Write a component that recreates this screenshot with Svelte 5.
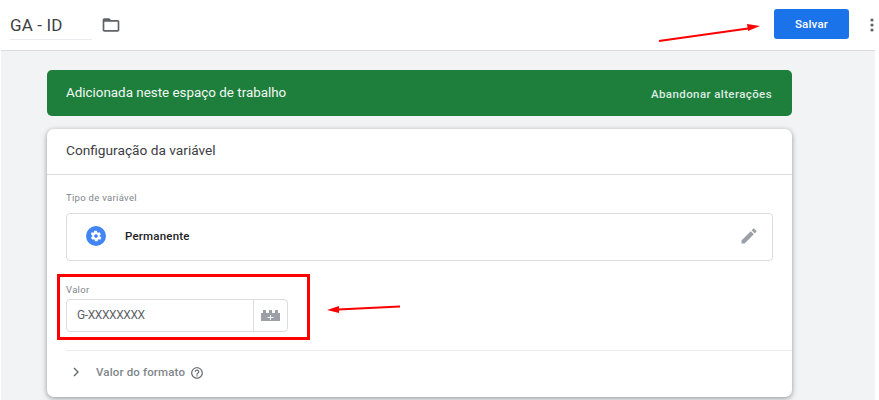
<script>
  let title = 'GA - ID';
  let value = 'G-XXXXXXXX';
</script>

<style>
  :global(body) {
    background: #fff;
    font-family: Roboto, "Liberation Sans", sans-serif;
  }

  .screen {
    position: relative;
    width: 879px;
    height: 400px;
    overflow: hidden;
    background: #fff;
  }

  .topbar {
    display: flex;
    align-items: center;
    height: 50px;
    box-sizing: border-box;
    padding: 0 0 0 10px;
  }

  .name {
    align-self: flex-start;
    width: 82px;
    height: 40px;
    box-sizing: border-box;
    padding-top: 14px;
    border-bottom: 1px solid #e8eaed;
    font-size: 17px;
    line-height: 22px;
    letter-spacing: 0.15px;
    color: #3c4043;
  }

  .folder {
    margin-left: 9px;
    margin-top: -1px;
  }

  .spacer {
    flex: 1;
  }

  .save {
    width: 75px;
    height: 30px;
    margin-top: -2px;
    border: none;
    border-radius: 3px;
    background: #1a73e8;
    color: #fff;
    font-family: inherit;
    font-size: 11.5px;
    font-weight: 500;
    letter-spacing: 0.2px;
    padding: 0;
  }

  .more {
    margin-left: 16px;
    margin-top: -1px;
  }

  .page {
    margin: 0 4px 0 1px;
    height: 350px;
    box-sizing: border-box;
    border-top: 1px solid #dadce0;
    background: #f1f3f4;
    padding: 19px 83px 0 46px;
  }

  .banner {
    display: flex;
    align-items: center;
    justify-content: space-between;
    height: 46px;
    box-sizing: border-box;
    padding: 0 20px 0 19px;
    margin-bottom: 13px;
    border-radius: 5px;
    background: #1e7e3c;
    color: #fff;
  }

  .banner-title {
    font-size: 13.4px;
    margin-top: -2px;
    color: #f3f8f4;
  }

  .banner-action {
    font-size: 11.5px;
    font-weight: 500;
    letter-spacing: 0.4px;
    color: #dcebe0;
    margin-top: 2px;
  }

  .card {
    height: 268px;
    border-radius: 7px;
    background: #fff;
    box-shadow: 0 1px 4px rgba(60, 64, 67, 0.35), 0 2px 6px rgba(60, 64, 67, 0.2);
    overflow: hidden;
  }

  .card-head {
    height: 46px;
    box-sizing: border-box;
    padding: 13px 19px 0;
    border-bottom: 1px solid #dadce0;
    font-size: 13.7px;
    line-height: 17px;
    color: #3c4043;
  }

  .card-body {
    padding: 16px 19px 0;
  }

  .label {
    font-size: 9.5px;
    line-height: 13px;
    letter-spacing: 0.3px;
    color: #80868b;
  }

  .type-box {
    display: flex;
    align-items: center;
    height: 48px;
    box-sizing: border-box;
    margin-top: 9px;
    padding: 0 13px 2px 19px;
    border: 1px solid #dadce0;
    border-radius: 4px;
  }

  .type-name {
    margin-left: 19px;
    font-size: 11.5px;
    font-weight: 500;
    letter-spacing: 0.2px;
    color: #202124;
    flex: 1;
    margin-top: -1px;
  }

  .value-label {
    margin-top: 22px;
  }

  .field {
    display: flex;
    width: 222px;
    height: 33px;
    box-sizing: border-box;
    margin-top: 3px;
    border: 1px solid #dadce0;
    border-radius: 4px;
  }

  .field-text {
    flex: 1;
    padding: 7px 0 0 10px;
    font-size: 12px;
    line-height: 16px;
    letter-spacing: -0.4px;
    color: #5f6368;
  }

  .field-icon {
    display: flex;
    align-items: center;
    justify-content: center;
    width: 33px;
    border-left: 1px solid #dadce0;
  }

  .format {
    display: flex;
    align-items: center;
    height: 42px;
    margin: 18px 0 0 19px;
    padding-left: 5px;
    border-top: 1px solid #e8eaed;
    font-size: 11.5px;
    font-weight: 500;
    letter-spacing: 0.15px;
    color: #80868b;
  }

  .format-name {
    margin-left: 15px;
  }

  .help {
    margin-left: 5px;
    margin-top: 1px;
  }

  .marks {
    position: absolute;
    top: 0;
    left: 0;
    pointer-events: none;
  }
</style>

<div class="screen">
  <header class="topbar">
    <div class="name">{title}</div>
    <svg class="folder" width="20" height="20" viewBox="0 0 24 24" fill="#5f6368">
      <path d="M20 6h-8l-2-2H4c-1.100 0-2 .9-2 2v12c0 1.100.9 2 2 2h16c1.100 0 2-.9 2-2V8c0-1.100-.9-2-2-2zm0 12H4V8h16v10z" />
    </svg>
    <div class="spacer"></div>
    <button class="save">Salvar</button>
    <svg class="more" width="14" height="18" viewBox="0 0 14 18" fill="#5f6368">
      <circle cx="7" cy="4" r="1.600" />
      <circle cx="7" cy="9" r="1.600" />
      <circle cx="7" cy="14" r="1.600" />
    </svg>
  </header>

  <main class="page">
    <section class="banner">
      <span class="banner-title">Adicionada neste espaço de trabalho</span>
      <span class="banner-action">Abandonar alterações</span>
    </section>

    <section class="card">
      <div class="card-head">Configuração da variável</div>
      <div class="card-body">
        <div class="label">Tipo de variável</div>
        <div class="type-box">
          <svg width="20" height="20" viewBox="0 0 24 24">
            <circle cx="12" cy="12" r="12" fill="#4285f4" />
            <path fill="#fff" d="M17.400 12.800c0-.3.100-.5.100-.8s0-.5-.1-.8l1.700-1.300c.2-.1.200-.3.100-.5l-1.600-2.800c-.1-.2-.3-.2-.5-.2l-2 .8c-.4-.3-.9-.6-1.400-.8l-.3-2.100c0-.2-.2-.3-.4-.3h-3.200c-.2 0-.4.100-.4.300l-.3 2.100c-.5.2-.9.5-1.400.8l-2-.8c-.2-.1-.4 0-.5.200L4.600 9.400c-.1.200-.1.400.1.500l1.700 1.300c0 .3-.1.500-.1.800s0 .5.100.8l-1.700 1.300c-.2.100-.2.300-.1.500l1.600 2.800c.1.200.3.200.5.200l2-.8c.4.300.9.600 1.400.8l.3 2.100c0 .2.200.3.400.3h3.200c.2 0 .4-.1.400-.3l.3-2.100c.5-.2.900-.5 1.400-.8l2 .8c.2.100.4 0 .5-.2l1.600-2.800c.1-.2.100-.4-.1-.5l-1.700-1.300zM12 14.800c-1.500 0-2.800-1.300-2.800-2.800s1.300-2.800 2.800-2.800 2.800 1.300 2.800 2.800-1.300 2.800-2.800 2.800z" transform="translate(2.400 2.400) scale(.8)" />
          </svg>
          <span class="type-name">Permanente</span>
          <svg width="20" height="20" viewBox="0 0 24 24" fill="#9aa0a6">
            <path d="M3 17.250V21h3.750L17.810 9.940l-3.750-3.750L3 17.250zM20.710 7.040a1 1 0 0 0 0-1.410l-2.340-2.340a1 1 0 0 0-1.410 0l-1.830 1.830 3.750 3.750 1.830-1.830z" />
          </svg>
        </div>

        <div class="label value-label">Valor</div>
        <div class="field">
          <div class="field-text">{value}</div>
          <div class="field-icon">
            <svg width="19" height="11" viewBox="0 0 19 11" fill="#9aa0a6">
              <path d="M0 3h2V0h3v3h3V0h3v3h3V0h3v3h2v8H0z" />
              <path d="M9 5h1v2h2.500v1H10v2H9V8H6.500V7H9z" fill="#f1f3f4" />
            </svg>
          </div>
        </div>
      </div>

      <div class="format">
        <svg width="10" height="10" viewBox="0 0 10 10" fill="none" stroke="#5f6368" stroke-width="1.300">
          <path d="M3 1l4 4-4 4" />
        </svg>
        <span class="format-name">Valor do formato</span>
        <svg class="help" width="14" height="14" viewBox="0 0 24 24" fill="#5f6368">
          <path d="M11 18h2v-2h-2v2zm1-16C6.480 2 2 6.480 2 12s4.480 10 10 10 10-4.480 10-10S17.520 2 12 2zm0 18c-4.410 0-8-3.590-8-8s3.590-8 8-8 8 3.590 8 8-3.590 8-8 8zm0-14c-2.210 0-4 1.790-4 4h2c0-1.100.9-2 2-2s2 .9 2 2c0 2-3 1.750-3 5h2c0-2.250 3-2.500 3-5 0-2.210-1.790-4-4-4z" />
        </svg>
      </div>
    </section>
  </main>

  <svg class="marks" width="879" height="400" viewBox="0 0 879 400">
    <rect x="58.500" y="275.500" width="250" height="63" fill="none" stroke="#f00" stroke-width="3" />
    <path d="M659 41L748 28.500" stroke="#f00" stroke-width="2.200" fill="none" />
    <path d="M760 26L747 24L748 31z" fill="#f00" />
    <path d="M400 306.500L338 309.500" stroke="#f00" stroke-width="2.200" fill="none" />
    <path d="M327 310L339 306L339 313z" fill="#f00" />
  </svg>
</div>
